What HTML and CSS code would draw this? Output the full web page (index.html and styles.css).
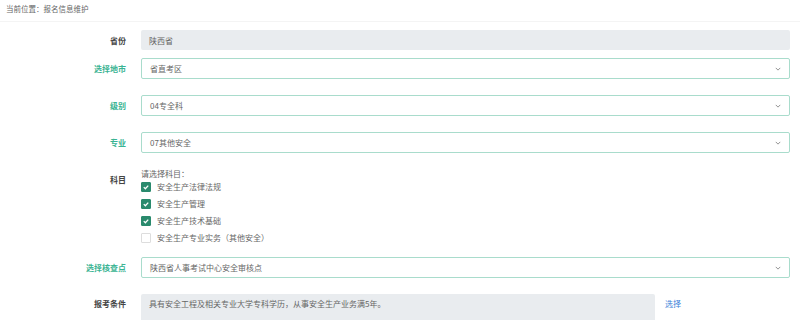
FILE: index.html
```html
<!DOCTYPE html>
<html lang="zh-CN">
<head>
    <meta charset="UTF-8">
    <title>报名信息维护</title>
    <link rel="stylesheet" href="styles.css">
</head>
<body>
    <div class="crumb">当前位置：报名信息维护</div>

    <div class="form">
        <div class="row row-first">
            <div class="label">省份</div>
            <div class="field readonly">陕西省</div>
        </div>

        <div class="row">
            <div class="label required">选择地市</div>
            <div class="field select">
                <span>省直考区</span>
                <svg class="chevron" viewBox="0 0 8 5"><path d="M1 1l3 3 3-3" /></svg>
            </div>
        </div>

        <div class="row">
            <div class="label required">级别</div>
            <div class="field select">
                <span>04专全科</span>
                <svg class="chevron" viewBox="0 0 8 5"><path d="M1 1l3 3 3-3" /></svg>
            </div>
        </div>

        <div class="row">
            <div class="label required">专业</div>
            <div class="field select">
                <span>07其他安全</span>
                <svg class="chevron" viewBox="0 0 8 5"><path d="M1 1l3 3 3-3" /></svg>
            </div>
        </div>

        <div class="row row-subjects">
            <div class="label label-top">科目</div>
            <div class="subjects">
                <div class="hint">请选择科目：</div>
                <div class="check-item">
                    <span class="box checked"><svg viewBox="0 0 10 10"><path d="M2.2 5.2l2 2 3.6-4" /></svg></span>
                    安全生产法律法规
                </div>
                <div class="check-item">
                    <span class="box checked"><svg viewBox="0 0 10 10"><path d="M2.2 5.2l2 2 3.6-4" /></svg></span>
                    安全生产管理
                </div>
                <div class="check-item">
                    <span class="box checked"><svg viewBox="0 0 10 10"><path d="M2.2 5.2l2 2 3.6-4" /></svg></span>
                    安全生产技术基础
                </div>
                <div class="check-item">
                    <span class="box"></span>
                    安全生产专业实务（其他安全）
                </div>
            </div>
        </div>

        <div class="row">
            <div class="label required">选择核查点</div>
            <div class="field select">
                <span>陕西省人事考试中心安全审核点</span>
                <svg class="chevron" viewBox="0 0 8 5"><path d="M1 1l3 3 3-3" /></svg>
            </div>
        </div>

        <div class="row row-cond">
            <div class="label label-top">报考条件</div>
            <div class="cond-wrap">
                <div class="field readonly condition">具有安全工程及相关专业大学专科学历，从事安全生产业务满5年。</div>
                <a class="pick" href="#">选择</a>
            </div>
        </div>
    </div>
</body>
</html>
```

FILE: styles.css
```css
body {
    margin: 0;
    background: #fff;
    font-family: "Noto Sans CJK SC", "Noto Sans", sans-serif;
    font-size: 8px;
    color: #555;
}

.crumb {
    height: 21px;
    line-height: 17px;
    padding-left: 6px;
    font-size: 7.5px;
    color: #666;
    border-bottom: 1px solid #f4f4f4;
}

.form {
    padding-top: 8px;
}

.row {
    display: grid;
    grid-template-columns: 126px 649px;
    column-gap: 15px;
    align-items: center;
    margin-bottom: 16px;
}

.row-first {
    margin-bottom: 8px;
}

.label {
    text-align: right;
    color: #444;
    font-weight: bold;
}

.label.required {
    color: #3ab493;
}

.label-top {
    align-self: start;
}

.field {
    box-sizing: border-box;
    height: 21px;
    padding: 0 8px;
    display: flex;
    align-items: center;
    color: #666;
}

.readonly {
    height: 20px;
    background: #e9ecef;
    border-radius: 2px;
}

.select {
    border: 1px solid #a9dccc;
    border-radius: 2px;
    justify-content: space-between;
    background: #fff;
}

.chevron {
    width: 6px;
    height: 4px;
    fill: none;
    stroke: #888;
    stroke-width: 1.2;
}

.row-subjects {
    margin-bottom: 11px;
}

.row-subjects .label {
    padding-top: 5px;
}

.subjects {
    display: flex;
    flex-direction: column;
    color: #666;
}

.hint {
    line-height: 9px;
}

.check-item {
    height: 17px;
    display: flex;
    align-items: center;
    gap: 6px;
}

.box {
    box-sizing: border-box;
    width: 10px;
    height: 10px;
    border: 1px solid #ddd;
    border-radius: 1px;
    background: #fff;
    display: flex;
}

.box.checked {
    border-color: #2a8a6d;
    background: #2a8a6d;
}

.box svg {
    width: 8px;
    height: 8px;
    fill: none;
    stroke: #fff;
    stroke-width: 1.6;
}

.row-cond {
    align-items: start;
}

.row-cond .label {
    padding-top: 4px;
}

.cond-wrap {
    display: flex;
    align-items: flex-start;
    gap: 10px;
}

.condition {
    width: 514px;
    height: 34px;
    align-items: flex-start;
    padding-top: 4px;
}

.pick {
    color: #3b7fd8;
    text-decoration: none;
    padding-top: 4px;
}
```
